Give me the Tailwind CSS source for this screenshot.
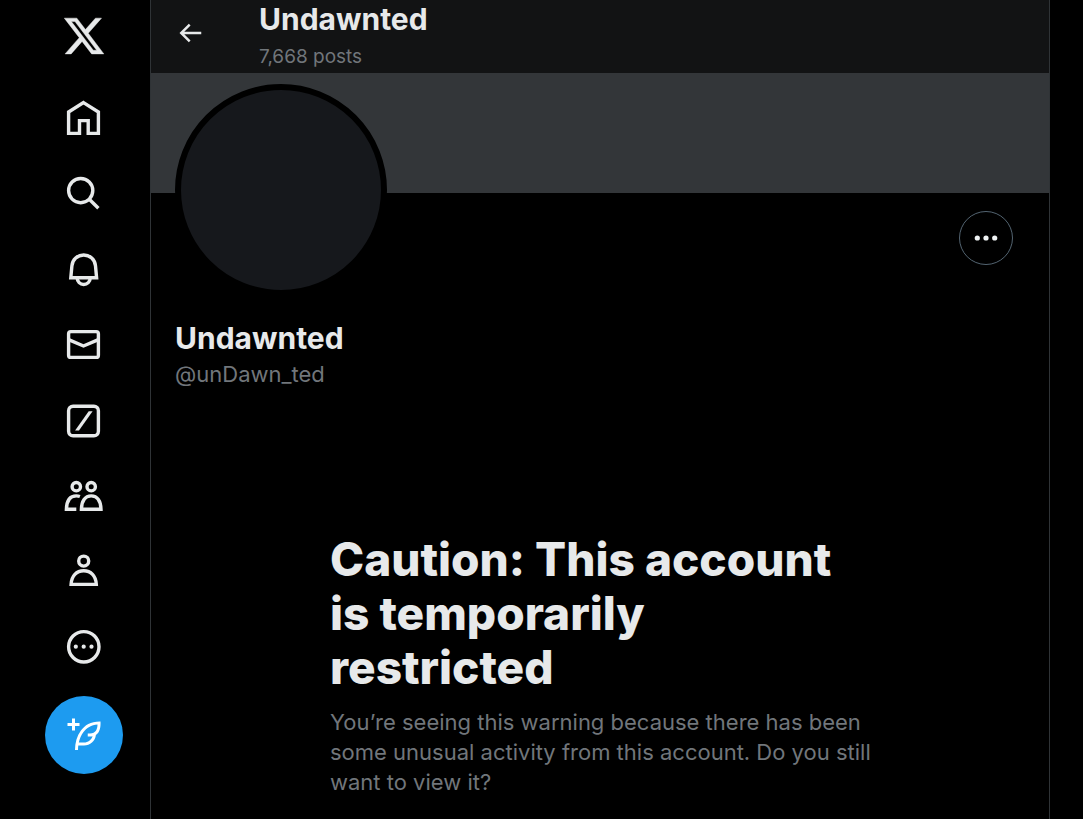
<!DOCTYPE html>
<html lang="en">
<head>
  <meta charset="UTF-8" />
  <meta name="viewport" content="width=device-width, initial-scale=1.0" />
  <title>Undawnted (@unDawn_ted) / X</title>
  <script src="https://cdn.jsdelivr.net/npm/@tailwindcss/browser@4"></script>
</head>
<body class="bg-black text-[#e7e9ea] font-['Inter','Liberation_Sans',sans-serif]">
  <div class="flex min-h-screen pr-[33px]">
    <!-- Sidebar -->
    <header class="w-[150px] shrink-0 flex flex-col items-center pl-[18px] pt-[14px]">
      <a href="#" aria-label="X" class="block">
        <svg viewBox="0 0 24 24" class="size-11" fill="currentColor" stroke="currentColor" stroke-width="0.25"><path d="M18.244 2.25h3.308l-7.227 8.26 8.502 11.24H16.17l-5.214-6.817L4.99 21.75H1.68l7.73-8.835L1.254 2.25H8.08l4.713 6.231zm-1.161 17.52h1.833L7.084 4.126H5.117z"/></svg>
      </a>
      <nav class="mt-10 h-[568px] flex flex-col justify-between">
        <a href="#" aria-label="Home">
          <svg viewBox="0 0 40 40" class="size-10" fill="none" stroke="currentColor" stroke-width="3.4"><path d="M19.5 4.6L34.4 14V35.4H24.2V22.6H15.5V35.4H4.6V14Z"/></svg>
        </a>
        <a href="#" aria-label="Explore">
          <svg viewBox="0 0 40 40" class="size-10" fill="none" stroke="currentColor" stroke-width="3.4"><circle cx="16.7" cy="17.6" r="12.1"/><path d="M25.3 26.2L34.4 35.3"/></svg>
        </a>
        <a href="#" aria-label="Notifications">
          <svg viewBox="0 0 40 40" class="size-10" fill="none" stroke="currentColor" stroke-width="3.4"><path d="M6.8 28.8L7.9 16.8C8.5 10.4 13.5 6 19.7 6S30.9 10.4 31.5 16.8L32.6 28.8Z"/><path d="M13.2 29a6.5 6.5 0 0 0 13 0"/></svg>
        </a>
        <a href="#" aria-label="Messages">
          <svg viewBox="0 0 40 40" class="size-10" fill="none" stroke="currentColor" stroke-width="3.4"><rect x="4.6" y="7.6" width="29.8" height="25.8" rx="2.2"/><path d="M4.6 15.6L19.5 22L34.4 15.6"/></svg>
        </a>
        <a href="#" aria-label="Grok">
          <svg viewBox="0 0 40 40" class="size-10" fill="none" stroke="currentColor" stroke-width="3.4"><rect x="4.6" y="6.2" width="29.8" height="29.6" rx="4.5"/><path d="M24.7 11.3H28.6L15 30.6H11.1Z" fill="currentColor" stroke="none"/></svg>
        </a>
        <a href="#" aria-label="Communities">
          <svg viewBox="0 0 40 40" class="size-10" fill="none" stroke="currentColor" stroke-width="3.4"><circle cx="12.3" cy="11.7" r="4.2"/><circle cx="27.2" cy="11.7" r="4.2"/><path d="M17.4 34.3C17.6 26 21 20.9 27.2 20.9S36.8 26 37 34.3Z"/><path d="M15.9 21.5C14.8 21.1 13.6 20.9 12.3 20.9C6 20.9 2.6 26 2.4 34.3H12.3"/></svg>
        </a>
        <a href="#" aria-label="Profile">
          <svg viewBox="0 0 40 40" class="size-10" fill="none" stroke="currentColor" stroke-width="3.4"><circle cx="19.7" cy="10.1" r="5"/><path d="M7.1 33.4C7.5 25 12.5 19.8 19.7 19.8S31.9 25 32.3 33.4Z"/></svg>
        </a>
        <button type="button" aria-label="More">
          <svg viewBox="0 0 40 40" class="size-10" fill="none" stroke="currentColor" stroke-width="3.4"><circle cx="19.8" cy="20.8" r="15.2"/><g fill="currentColor" stroke="none"><circle cx="11.8" cy="20.7" r="2.1"/><circle cx="19.7" cy="20.7" r="2.1"/><circle cx="27.5" cy="20.7" r="2.1"/></g></svg>
        </button>
      </nav>
      <button type="button" aria-label="Post" class="mt-[30px] size-[78px] shrink-0 rounded-full bg-[#1d9bf0] text-white flex items-center justify-center">
        <svg viewBox="0 0 24 24" class="size-9" fill="currentColor"><path d="M23 3c-6.62-.1-10.38 2.421-13.05 6.03C7.29 12.61 6 17.331 6 22h2c0-1.007.07-2.012.19-3H12c4.1 0 7.48-3.082 7.94-7.054C22.79 10.147 23.17 6.359 23 3zm-7 8h-1.5v2H16c.63-.016 1.2-.08 1.72-.188C16.95 15.24 14.68 17 12 17H8.55c.57-2.512 1.57-4.851 3-6.78 2.16-2.912 5.29-4.911 9.45-5.187C20.95 8.079 19.9 11 16 11zM4 9V6H1V4h3V1h2v3h3v2H6v3H4z"/></svg>
      </button>
    </header>

    <!-- Profile column -->
    <main class="flex-1 min-w-0 border-x border-[#2f3336]">
      <div class="h-[73px] bg-[#121314] flex items-start pl-6">
        <button type="button" aria-label="Back" class="mt-[18px] mr-[54px]">
          <svg viewBox="0 0 24 24" class="size-[30px]" fill="currentColor"><path d="M7.414 13l5.043 5.04-1.414 1.42L3.586 12l7.457-7.46 1.414 1.42L7.414 11H21v2H7.414z"/></svg>
        </button>
        <div>
          <h2 class="text-[30px] leading-[38px] font-bold">Undawnted</h2>
          <p class="text-[19px] leading-[38px] text-[#71767b]">7,668 posts</p>
        </div>
      </div>
      <div class="h-[120px] bg-[#333639]"></div>
      <div class="px-6">
        <div class="flex justify-between items-start">
          <div class="-mt-[109px] size-[212px] rounded-full border-6 border-black bg-[#16181c]"></div>
          <button type="button" aria-label="More options" class="mt-[18px] mr-3 size-[54px] rounded-full border border-[#536471] flex items-center justify-center">
            <svg viewBox="0 0 28 28" class="size-7" fill="#eff3f4"><circle cx="5.3" cy="14" r="2.6"/><circle cx="14" cy="14" r="2.6"/><circle cx="22.7" cy="14" r="2.6"/></svg>
          </button>
        </div>
        <h1 class="mt-[23px] text-[30px] leading-[38px] font-bold">Undawnted</h1>
        <p class="text-[22px] leading-[34px] text-[#71767b]">@unDawn_ted</p>
      </div>
      <section class="mt-[141px] mx-auto max-w-[540px]">
        <h2 class="text-[46px] leading-[54px] font-extrabold">Caution: This account is temporarily restricted</h2>
        <p class="mt-[13px] -mr-2 text-[22px] leading-[30px] text-[#71767b]">You’re seeing this warning because there has been some unusual activity from this account. Do you still want to view it?</p>
      </section>
    </main>
  </div>
</body>
</html>
